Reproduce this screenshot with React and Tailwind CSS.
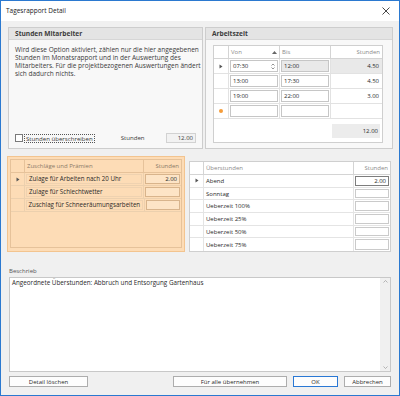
import React from 'react';

// Zeilen-Indikator (kleines Dreieck)
function RowArrow() {
  return (
    <svg width="4" height="5" viewBox="0 0 4 5">
      <path d="M0.5 0.5 L3.5 2.5 L0.5 4.5 Z" fill="#555" />
    </svg>
  );
}

function Panel({ title, className, children }) {
  return (
    <div className={`border border-[#cdcdcd] bg-[#f8f8f8] flex flex-col ${className}`}>
      <div className="h-[12px] bg-[#e4e4e4] border-b border-[#d6d6d6] px-[6px] flex items-center font-bold text-[#3c3c3c] text-[6.6px]">
        {title}
      </div>
      {children}
    </div>
  );
}

const ZEITEN = [
  { von: '07:30', bis: '12:00', std: '4.50', active: true },
  { von: '13:00', bis: '17:30', std: '4.50' },
  { von: '19:00', bis: '22:00', std: '3.00' },
];

const ZUSCHLAEGE = [
  { name: 'Zulage für Arbeiten nach 20 Uhr', std: '2.00', active: true },
  { name: 'Zulage für Schlechtwetter', std: '' },
  { name: 'Zuschlag für Schneeräumungsarbeiten', std: '' },
];

const UEBERSTUNDEN = [
  { name: 'Abend', std: '2.00', active: true },
  { name: 'Sonntag', std: '' },
  { name: 'Ueberzeit 100%', std: '' },
  { name: 'Ueberzeit 25%', std: '' },
  { name: 'Ueberzeit 50%', std: '' },
  { name: 'Ueberzeit 75%', std: '' },
];

export default function App() {
  return (
    <div className="w-[400px] h-[396px] flex flex-col border border-[#2b79d0] bg-[#f0f0f0] text-[#2a2a2a] text-[6px] leading-[8px] font-['Open_Sans','Noto_Sans',sans-serif]">
      {/* Titelleiste */}
      <div className="h-[20px] bg-white flex items-center justify-between pl-[5px] pr-[9px] text-[6.5px] text-[#222]">
        <span>Tagesrapport Detail</span>
        <svg width="8" height="8" viewBox="0 0 8 8">
          <path d="M0.5 0.5 L7.5 7.5 M7.5 0.5 L0.5 7.5" stroke="#333" strokeWidth="0.9" />
        </svg>
      </div>

      <div className="flex-1 flex flex-col px-[6px] pt-[6px]">
        {/* obere Reihe */}
        <div className="flex gap-[2px] h-[122px] ml-[1px]">
          <Panel title="Stunden Mitarbeiter" className="w-[195px]">
            <div className="flex-1 flex flex-col justify-between px-[6px] pt-[6px] pb-[5px] text-[#3a3a3a]">
              <p className="text-[6.5px] whitespace-nowrap">
                Wird diese Option aktiviert, zählen nur die hier angegebenen<br />
                Stunden im Monatsrapport und in der Auswertung des<br />
                Mitarbeiters. Für die projektbezogenen Auswertungen ändert<br />
                sich dadurch nichts.
              </p>
              <div className="flex items-center h-[10px]">
                <div className="w-[8px] h-[8px] bg-white border border-[#7a7a7a]" />
                <span className="ml-[1px] px-[1px] border border-dotted border-[#555] leading-[7px] text-[6.1px] whitespace-nowrap">Stunden überschreiben</span>
                <span className="ml-[26px] text-[6.1px]">Stunden</span>
                <div className="ml-auto w-[30px] h-[10px] bg-[#f2f2f2] border border-[#d2d2d2] flex items-center justify-end pr-[2px]">12.00</div>
              </div>
            </div>
          </Panel>

          <Panel title="Arbeitszeit" className="w-[188px]">
            <div className="ml-[7px] mt-[5px] w-[170px] bg-white border border-[#cfcfcf] flex flex-col">
              <div className="flex h-[13px] border-b border-[#d4d4d4] text-[#8a8a8a]">
                <div className="w-[15px] border-r border-[#d4d4d4]" />
                <div className="w-[51px] border-r border-[#d4d4d4] flex items-center justify-between px-[2px]">
                  <span>Von</span>
                  <svg width="5" height="3" viewBox="0 0 5 3"><path d="M0 3 L2.5 0 L5 3 Z" fill="#666" /></svg>
                </div>
                <div className="w-[51px] border-r border-[#d4d4d4] flex items-center px-[2px]">Bis</div>
                <div className="flex-1 flex items-center justify-end px-[2px]">Stunden</div>
              </div>
              {ZEITEN.map((z, i) => (
                <div key={i} className="flex h-[15px] border-b border-[#e2e2e2]">
                  <div className="w-[15px] border-r border-[#e2e2e2] flex items-center justify-center">
                    {z.active && <RowArrow />}
                  </div>
                  <div className="w-[51px] p-[1px] border-r border-[#e2e2e2]">
                    <div className="h-full bg-white border border-[#c6c6c6] flex items-center justify-between px-[2px]">
                      <span>{z.von}</span>
                      {z.active && (
                        <svg width="4" height="7" viewBox="0 0 4 7">
                          <path d="M0.5 2.5 L2 1 L3.5 2.5 M0.5 4.5 L2 6 L3.5 4.5" stroke="#666" strokeWidth="0.7" fill="none" />
                        </svg>
                      )}
                    </div>
                  </div>
                  <div className="w-[51px] p-[1px] border-r border-[#e2e2e2]">
                    <div className={`h-full border border-[#c6c6c6] flex items-center px-[2px] ${z.active ? 'bg-[#e9e9e9]' : 'bg-white'}`}>
                      {z.bis}
                    </div>
                  </div>
                  <div className={`flex-1 flex items-center justify-end px-[3px] ${z.active ? 'bg-[#e9e9e9]' : ''}`}>
                    {z.std}
                  </div>
                </div>
              ))}
              {/* neue Zeile */}
              <div className="flex h-[15px] border-b border-[#e2e2e2]">
                <div className="w-[15px] border-r border-[#e2e2e2] flex items-center justify-center">
                  <div className="w-[4px] h-[4px] rounded-full bg-[#f59c3a]" />
                </div>
                <div className="w-[51px] p-[1px] border-r border-[#e2e2e2]">
                  <div className="h-full bg-white border border-[#c6c6c6]" />
                </div>
                <div className="w-[51px] p-[1px] border-r border-[#e2e2e2]">
                  <div className="h-full bg-white border border-[#c6c6c6]" />
                </div>
                <div className="flex-1" />
              </div>
              <div className="h-[23px] flex items-center justify-end pr-[2px]">
                <div className="w-[48px] h-[14px] bg-[#ececec] flex items-center justify-end pr-[2px]">12.00</div>
              </div>
            </div>
          </Panel>
        </div>

        {/* Zuschläge und Überstunden */}
        <div className="flex gap-[4px] mt-[7px]">
          <div className="w-[178px] h-[96px] bg-[#fddcb6] border border-[#f3c48f] p-[2px]">
            <div className="h-[89px] border border-[#e6c29a] flex flex-col">
              <div className="flex h-[13px] border-b border-[#e6c29a] text-[#8a7a68]">
                <div className="w-[14px] border-r border-[#e6c29a]" />
                <div className="flex-1 border-r border-[#e6c29a] flex items-center px-[2px]">Zuschläge und Prämien</div>
                <div className="w-[37px] flex items-center justify-end px-[2px]">Stunden</div>
              </div>
              {ZUSCHLAEGE.map((z, i) => (
                <div key={i} className="flex h-[13px] border-b border-[#ecd0ae]">
                  <div className="w-[14px] border-r border-[#ecd0ae] flex items-center justify-center">
                    {z.active && <RowArrow />}
                  </div>
                  <div className="flex-1 p-[1px] border-r border-[#ecd0ae]">
                    <div className="h-full border border-[#efd2b0] flex items-center px-[2px] whitespace-nowrap text-[#2a2a2a] text-[6.2px]">{z.name}</div>
                  </div>
                  <div className="w-[37px] p-[1px]">
                    <div className="h-full border border-[#d8b48c] bg-[#fde4c6] flex items-center justify-end px-[2px]">{z.std}</div>
                  </div>
                </div>
              ))}
            </div>
          </div>

          <div className="w-[202px] h-[91px] mt-[5px] bg-white border border-[#cfcfcf] flex flex-col">
            <div className="flex h-[13px] border-b border-[#d4d4d4] text-[#8a8a8a]">
              <div className="w-[14px] border-r border-[#d4d4d4]" />
              <div className="flex-1 border-r border-[#d4d4d4] flex items-center px-[2px]">Überstunden</div>
              <div className="w-[36px] flex items-center justify-end px-[2px]">Stunden</div>
            </div>
            {UEBERSTUNDEN.map((u, i) => (
              <div key={i} className="flex h-[13px] border-b border-[#e4e4e4] last:border-b-0">
                <div className="w-[14px] border-r border-[#e4e4e4] flex items-center justify-center">
                  {u.active && <RowArrow />}
                </div>
                <div className="flex-1 border-r border-[#e4e4e4] flex items-center px-[2px]">{u.name}</div>
                <div className="w-[36px] p-[1px]">
                  <div className={`h-full bg-white border flex items-center justify-end px-[2px] ${u.active ? 'border-[#7d7d7d]' : 'border-[#cacaca]'}`}>{u.std}</div>
                </div>
              </div>
            ))}
          </div>
        </div>

        {/* Beschrieb */}
        <div className="mt-[15px] ml-[2px] text-[#555]">Beschrieb</div>
        <div className="mt-[2px] ml-[2px] w-[382px] h-[95px] bg-white border border-[#c8c8c8] flex">
          <div className="flex-1 px-[2px] pt-[1px] text-[6.3px] whitespace-nowrap">Angeordnete Überstunden: Abbruch und Entsorgung Gartenhaus</div>
          <div className="w-[10px] bg-[#f0f0f0] flex flex-col justify-between items-center py-[2px]">
            <svg width="5" height="3" viewBox="0 0 5 3"><path d="M0.5 2.5 L2.5 0.5 L4.5 2.5" stroke="#9a9a9a" strokeWidth="0.7" fill="none" /></svg>
            <svg width="5" height="3" viewBox="0 0 5 3"><path d="M0.5 0.5 L2.5 2.5 L4.5 0.5" stroke="#9a9a9a" strokeWidth="0.7" fill="none" /></svg>
          </div>
        </div>

        {/* Buttons */}
        <div className="mt-[4px] ml-[2px] w-[382px] flex justify-between">
          <button className="w-[79px] h-[11px] bg-[#fdfdfd] border border-[#adadad] flex items-center justify-center">Detail löschen</button>
          <div className="flex gap-[6px]">
            <button className="w-[114px] h-[11px] bg-[#fdfdfd] border border-[#adadad] flex items-center justify-center">Für alle übernehmen</button>
            <button className="w-[45px] h-[11px] bg-[#fdfdfd] border border-[#2a78d4] flex items-center justify-center">OK</button>
            <button className="w-[47px] h-[11px] bg-[#fdfdfd] border border-[#adadad] flex items-center justify-center">Abbrechen</button>
          </div>
        </div>
      </div>
    </div>
  );
}
